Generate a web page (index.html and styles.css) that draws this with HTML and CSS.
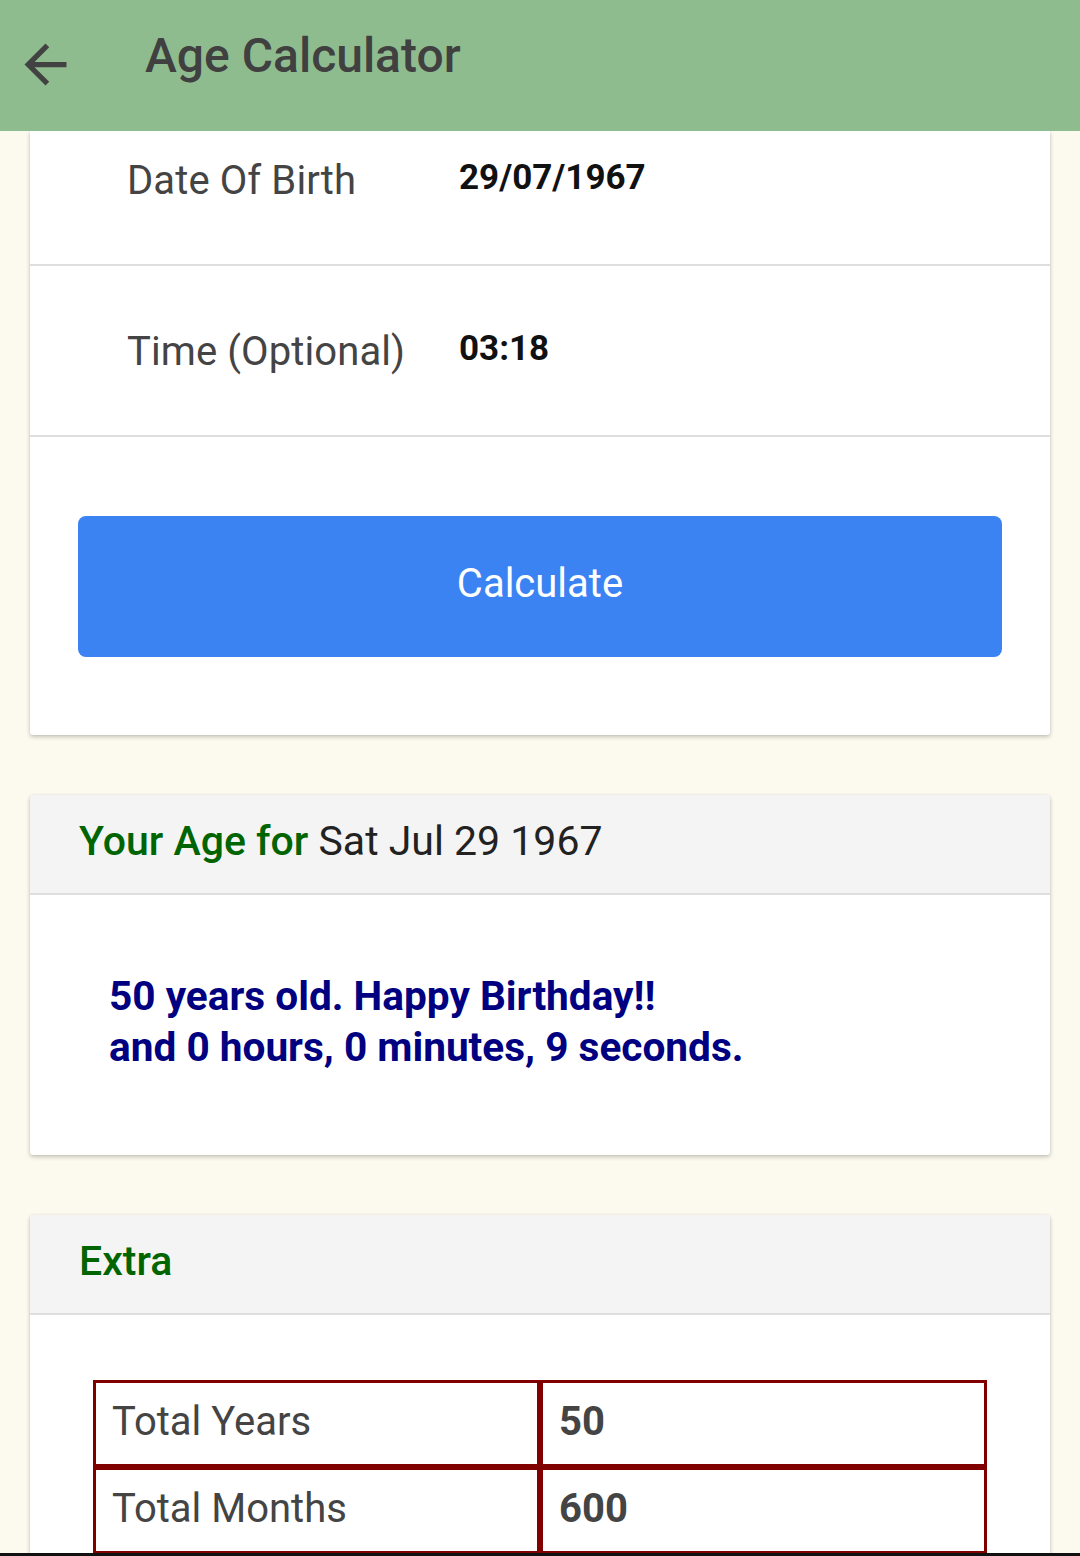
FILE: index.html
```html
<!DOCTYPE html>
<html lang="en">
<head>
<meta charset="utf-8">
<title>Age Calculator</title>
<link rel="stylesheet" href="styles.css">
</head>
<body>
<header class="appbar">
  <svg class="back" viewBox="0 0 24 24" width="63" height="63" aria-hidden="true">
    <path d="M20 11H7.83l5.59-5.59L12 4l-8 8 8 8 1.41-1.41L7.83 13H20v-2z" fill="#424242"/>
  </svg>
  <h1 class="title">Age Calculator</h1>
</header>

<main class="content">
  <section class="card">
    <div class="field field-first">
      <span class="field-label">Date Of Birth</span>
      <span class="field-value">29/07/1967</span>
    </div>
    <div class="field">
      <span class="field-label">Time (Optional)</span>
      <span class="field-value">03:18</span>
    </div>
    <div class="action">
      <button class="btn" type="button">Calculate</button>
    </div>
  </section>

  <section class="card">
    <div class="card-head"><span class="accent">Your Age for</span> Sat Jul 29 1967</div>
    <div class="result">
      <p>50 years old. Happy Birthday!!</p>
      <p>and 0 hours, 0 minutes, 9 seconds.</p>
    </div>
  </section>

  <section class="card">
    <div class="card-head"><span class="accent">Extra</span></div>
    <div class="extra">
      <table class="stats">
        <tr><td>Total Years</td><td class="num">50</td></tr>
        <tr><td>Total Months</td><td class="num">600</td></tr>
      </table>
    </div>
  </section>
</main>
<div class="navedge"></div>
</body>
</html>
```

FILE: styles.css
```css
html, body {
  margin: 0;
  padding: 0;
}
body {
  background: #fcf9ef;
  font-family: Roboto, "Noto Sans", "Liberation Sans", sans-serif;
  width: 1080px;
  height: 1556px;
  overflow: hidden;
}
.appbar {
  height: 131px;
  background: #8fbc8f;
  display: flex;
  align-items: flex-start;
  position: relative;
  z-index: 2;
}
.back {
  margin: 33px 0 0 14px;
  flex: none;
}
.title {
  margin: 24px 0 0 68px;
  font-size: 48px;
  font-weight: 500;
  line-height: 64px;
  color: #404040;
  letter-spacing: 0;
}
.content {
  display: flex;
  flex-direction: column;
  gap: 60px;
  padding: 0 30px;
}
.card {
  background: #fff;
  border-radius: 3px;
  box-shadow: 0 2px 4px rgba(0,0,0,0.22), 0 0 2px rgba(0,0,0,0.08);
}
.content .card:first-child {
  border-radius: 0 0 3px 3px;
}
.field {
  display: flex;
  align-items: flex-start;
  height: 111px;
  padding: 58px 0 0 97px;
  border-bottom: 2px solid #dedede;
}
.field-first {
  height: 111px;
  padding-top: 22px;
}
.field-label {
  width: 332px;
  font-size: 40px;
  line-height: 56px;
  color: #444;
  letter-spacing: 0.1px;
}
.field-value {
  margin-top: 4px;
  font-size: 35px;
  font-weight: 700;
  line-height: 42px;
  color: #111;
}
.action {
  padding: 79px 48px 78px;
}
.btn {
  display: block;
  width: 100%;
  height: 141px;
  border: none;
  border-radius: 8px;
  background: #3b82f3;
  color: #fff;
  font-family: Roboto, "Noto Sans", "Liberation Sans", sans-serif;
  font-size: 40px;
  padding: 0 0 6px;
}
.card-head {
  height: 98px;
  line-height: 92px;
  padding-left: 49px;
  background: #f4f4f4;
  border-bottom: 2px solid #dedede;
  border-radius: 3px 3px 0 0;
  font-size: 41px;
  color: #222;
}
.accent {
  color: #006400;
  font-weight: 500;
}
.result {
  height: 260px;
  box-sizing: border-box;
  padding: 76px 0 0 79px;
}
.result p {
  margin: 0;
  font-size: 40.6px;
  line-height: 51px;
  font-weight: 700;
  color: #000080;
}
.extra {
  padding: 65px 63px 0;
  height: 241px;
}
.stats {
  width: 100%;
  border-collapse: separate;
  border-spacing: 0;
  table-layout: fixed;
}
.stats td {
  border: 3px solid #800000;
  height: 87px;
  box-sizing: border-box;
  padding: 0 16px 5px;
  font-size: 40px;
  color: #444;
  vertical-align: middle;
}
.stats td.num {
  font-weight: 700;
}
.navedge {
  position: fixed;
  left: 0;
  right: 0;
  bottom: 0;
  height: 3px;
  background: #111;
}
```
